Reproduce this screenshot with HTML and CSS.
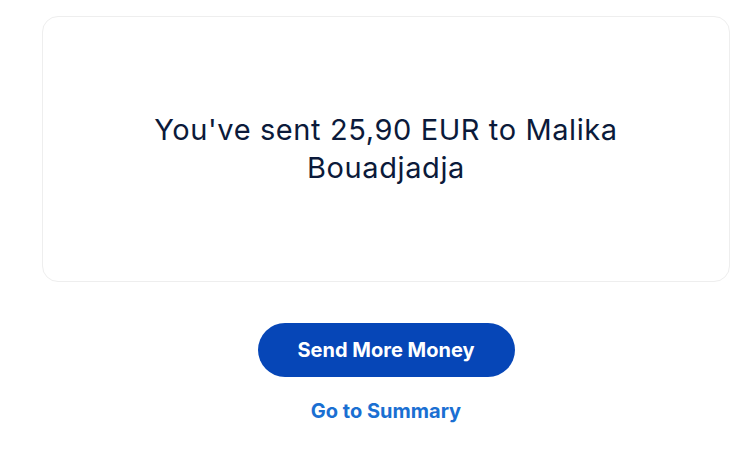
FILE: index.html
```html
<!DOCTYPE html>
<html lang="en">
<head>
<meta charset="utf-8">
<title>Sent</title>
<link rel="stylesheet" href="styles.css">
</head>
<body>
<main class="page">
  <section class="card">
    <h1 class="message">You've sent 25,90 EUR to Malika Bouadjadja</h1>
  </section>
  <div class="actions">
    <button class="primary">Send More Money</button>
    <a class="link" href="#">Go to Summary</a>
  </div>
</main>
</body>
</html>
```

FILE: styles.css
```css
html, body {
  margin: 0;
  padding: 0;
  background: #ffffff;
}
body {
  font-family: Inter, "Noto Sans", "Liberation Sans", sans-serif;
}
.page {
  width: 688px;
  margin: 0 0 0 42px;
  padding-top: 16px;
  display: flex;
  flex-direction: column;
  align-items: center;
}
.card {
  box-sizing: border-box;
  width: 688px;
  height: 266px;
  border: 1px solid #eeeeee;
  border-radius: 16px;
  display: flex;
  align-items: center;
  justify-content: center;
  padding: 0 90px;
}
.message {
  margin: 0;
  font-size: 29px;
  font-weight: 400;
  line-height: 38px;
  text-align: center;
  color: #0b1a3a;
  letter-spacing: 0.6px;
}
.actions {
  margin-top: 41px;
  display: flex;
  flex-direction: column;
  align-items: center;
}
.primary {
  width: 257px;
  height: 54px;
  border: none;
  border-radius: 27px;
  background: #0646b7;
  color: #ffffff;
  font-family: inherit;
  font-size: 20px;
  font-weight: 700;
  cursor: pointer;
}
.link {
  margin-top: 22px;
  color: #1a6fd2;
  font-size: 20px;
  font-weight: 700;
  text-decoration: none;
  line-height: 24px;
}
```
